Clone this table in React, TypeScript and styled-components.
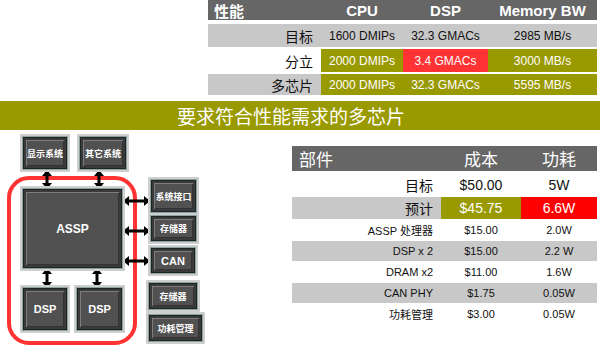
import { Fragment } from 'react'
import styled, { createGlobalStyle } from 'styled-components'

const GlobalStyle = createGlobalStyle`
  body {
    margin: 0;
    background: #fff;
    font-family: "Liberation Sans", Arial, "Noto Sans CJK SC", sans-serif;
  }
`

const OLIVE = '#999900'
const GREY = '#c8c8c8'
const DARK = '#666666'

const Page = styled.div`
  width: 600px;
  height: 353px;
  overflow: hidden;
  display: flex;
  flex-direction: column;
`

// ---- top performance table
const PerfTable = styled.div`
  margin-left: 208px;
  width: 389px;
  display: grid;
  grid-template-columns: 113px 82px 85px 109px;
  grid-template-rows: 22px 23px 23px 21px;
  row-gap: 2px;
`

const PerfHead = styled.div<{ $left?: boolean }>`
  background: ${DARK};
  color: #fff;
  font-weight: bold;
  font-size: 15px;
  display: flex;
  align-items: center;
  justify-content: ${p => (p.$left ? 'flex-start' : 'center')};
  padding-left: ${p => (p.$left ? '6px' : '0')};
  margin-bottom: 2px;
`

const Cell = styled.div<{ $bg?: string; $label?: boolean; $light?: boolean; $size?: number }>`
  background: ${p => p.$bg || 'transparent'};
  color: ${p => (p.$light ? '#fff' : '#111')};
  font-size: ${p => p.$size || 12}px;
  display: flex;
  align-items: center;
  justify-content: ${p => (p.$label ? 'flex-end' : 'center')};
  padding-right: ${p => (p.$label ? '8px' : '0')};
  white-space: nowrap;
`

const Banner = styled.div`
  margin-top: 6px;
  height: 29px;
  background: ${OLIVE};
  color: #fff;
  font-family: "Noto Sans CJK SC", sans-serif;
  font-size: 19px;
  display: flex;
  align-items: center;
  justify-content: center;
  padding-right: 18px;
`

// ---- bottom part
const Bottom = styled.div`
  display: flex;
  justify-content: space-between;
  flex: 1;
`

const Diagram = styled.div`
  position: relative;
  width: 210px;
  height: 221px;
`

const Wires = styled.svg`
  position: absolute;
  left: 0;
  top: 0;
`

const Node = styled.div<{ $x: number; $y: number; $w: number; $h: number; $size?: number }>`
  position: absolute;
  left: ${p => p.$x}px;
  top: ${p => p.$y}px;
  width: ${p => p.$w}px;
  height: ${p => p.$h}px;
  box-sizing: border-box;
  background: #515151;
  border: 1px solid #1b2626;
  box-shadow: 0 0 0 1px #8fa0a0, 0 0 0 3px #cfcfcf, inset 0 0 0 2px #3a3a3a,
    inset 3px 3px 0 #7d7d7d, inset -3px -3px 0 #333;
  color: #fff;
  font-weight: bold;
  font-size: ${p => p.$size || 9}px;
  display: flex;
  align-items: center;
  justify-content: center;
  white-space: nowrap;
`

const CostTable = styled.div`
  margin-top: 16px;
  margin-right: 3px;
  width: 305px;
  align-self: flex-start;
  display: grid;
  grid-template-columns: 149px 80px 76px;
  grid-template-rows: 27px 22px 22px 20px 20px 20px 20px 20px;
  row-gap: 1px;
`

const CostHead = styled.div<{ $left?: boolean }>`
  background: ${DARK};
  color: #fff;
  font-family: "Noto Sans CJK SC", sans-serif;
  font-size: 17px;
  display: flex;
  align-items: center;
  justify-content: ${p => (p.$left ? 'flex-start' : 'center')};
  padding-left: ${p => (p.$left ? '7px' : '0')};
  margin-bottom: 2px;
`

const perfRows = [
  { label: '目标', bg: GREY, labelBg: GREY, light: false, cells: ['1600 DMIPs', '32.3 GMACs', '2985 MB/s'], red: -1 },
  { label: '分立', bg: OLIVE, labelBg: '#fff', light: true, cells: ['2000 DMIPs', '3.4 GMACs', '3000 MB/s'], red: 1 },
  { label: '多芯片', bg: OLIVE, labelBg: GREY, light: true, cells: ['2000 DMIPs', '32.3 GMACs', '5595 MB/s'], red: -1 },
]

const costRows = [
  ['ASSP 处理器', '$15.00', '2.0W'],
  ['DSP x 2', '$15.00', '2.2 W'],
  ['DRAM x2', '$11.00', '1.6W'],
  ['CAN PHY', '$1.75', '0.05W'],
  ['功耗管理', '$3.00', '0.05W'],
]

const VArrow = ({ x, y1, y2 }: { x: number; y1: number; y2: number }) => (
  <g fill="#000">
    <rect x={x - 1.5} y={y1 + 4} width={3} height={y2 - y1 - 8} />
    <polygon points={`${x},${y1} ${x - 5},${y1 + 6} ${x + 5},${y1 + 6}`} />
    <polygon points={`${x},${y2} ${x - 5},${y2 - 6} ${x + 5},${y2 - 6}`} />
  </g>
)

const HArrow = ({ y, x1, x2 }: { y: number; x1: number; x2: number }) => (
  <g fill="#000">
    <rect x={x1 + 4} y={y - 1.5} width={x2 - x1 - 8} height={3} />
    <polygon points={`${x1},${y} ${x1 + 6},${y - 5} ${x1 + 6},${y + 5}`} />
    <polygon points={`${x2},${y} ${x2 - 6},${y - 5} ${x2 - 6},${y + 5}`} />
  </g>
)

const App = () => {
  return (
    <Page>
      <GlobalStyle />
      <PerfTable>
        <PerfHead $left>性能</PerfHead>
        <PerfHead>CPU</PerfHead>
        <PerfHead>DSP</PerfHead>
        <PerfHead>Memory BW</PerfHead>
        {perfRows.map(r => (
          <Fragment key={r.label}>
            <Cell $label $bg={r.labelBg} $size={14}>{r.label}</Cell>
            {r.cells.map((c, i) => (
              <Cell key={i} $bg={i === r.red ? '#ff3333' : r.bg} $light={r.light}>{c}</Cell>
            ))}
          </Fragment>
        ))}
      </PerfTable>

      <Banner>要求符合性能需求的多芯片</Banner>

      <Bottom>
        <Diagram>
          <Wires width={210} height={221}>
            <rect x={9} y={48} width={126} height={165} rx={20} fill="none" stroke="#ff3333" strokeWidth={4} />
            <VArrow x={47} y1={40} y2={59} />
            <VArrow x={99} y1={40} y2={59} />
            <VArrow x={47} y1={138} y2={158} />
            <VArrow x={97} y1={138} y2={158} />
            <HArrow y={71} x1={123} x2={150} />
            <HArrow y={101} x1={123} x2={150} />
            <HArrow y={131} x1={123} x2={150} />
          </Wires>
          <Node $x={23} $y={7} $w={44} $h={32}>显示系统</Node>
          <Node $x={80} $y={7} $w={46} $h={32}>其它系统</Node>
          <Node $x={23} $y={59} $w={99} $h={79} $size={12}>ASSP</Node>
          <Node $x={23} $y={158} $w={44} $h={42} $size={11}>DSP</Node>
          <Node $x={77} $y={158} $w={45} $h={42} $size={11}>DSP</Node>
          <Node $x={151} $y={50} $w={45} $h={32}>系统接口</Node>
          <Node $x={151} $y={86} $w={45} $h={25}>存储器</Node>
          <Node $x={151} $y={118} $w={44} $h={25} $size={11}>CAN</Node>
          <Node $x={149} $y={153} $w={48} $h={26}>存储器</Node>
          <Node $x={149} $y={185} $w={53} $h={26}>功耗管理</Node>
        </Diagram>

        <CostTable>
          <CostHead $left>部件</CostHead>
          <CostHead>成本</CostHead>
          <CostHead>功耗</CostHead>

          <Cell $label $size={14}>目标</Cell>
          <Cell $size={14}>$50.00</Cell>
          <Cell $size={14}>5W</Cell>

          <Cell $label $bg={GREY} $size={14}>预计</Cell>
          <Cell $bg={OLIVE} $light $size={14}>$45.75</Cell>
          <Cell $bg="#ff0000" $light $size={14}>6.6W</Cell>

          {costRows.map((r, i) => (
            <Fragment key={r[0]}>
              <Cell $label $bg={i % 2 ? GREY : '#fff'} $size={11}>{r[0]}</Cell>
              <Cell $bg={i % 2 ? GREY : '#fff'} $size={11}>{r[1]}</Cell>
              <Cell $bg={i % 2 ? GREY : '#fff'} $size={11}>{r[2]}</Cell>
            </Fragment>
          ))}
        </CostTable>
      </Bottom>
    </Page>
  )
}

export default App
